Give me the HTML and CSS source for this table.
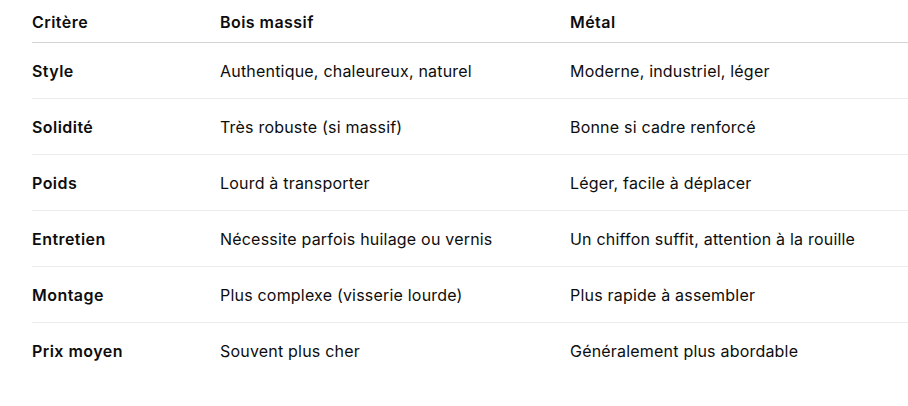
FILE: index.html
```html
<!DOCTYPE html>
<html lang="fr">
<head>
<meta charset="utf-8">
<link rel="stylesheet" href="styles.css">
</head>
<body>
<div class="wrap">
<table class="cmp">
<colgroup><col class="c1"><col class="c2"><col class="c3"></colgroup>
<thead>
<tr><th>Critère</th><th>Bois massif</th><th>Métal</th></tr>
</thead>
<tbody>
<tr><td class="k">Style</td><td>Authentique, chaleureux, naturel</td><td>Moderne, industriel, léger</td></tr>
<tr><td class="k">Solidité</td><td>Très robuste (si massif)</td><td>Bonne si cadre renforcé</td></tr>
<tr><td class="k">Poids</td><td>Lourd à transporter</td><td>Léger, facile à déplacer</td></tr>
<tr><td class="k">Entretien</td><td>Nécessite parfois huilage ou vernis</td><td>Un chiffon suffit, attention à la rouille</td></tr>
<tr><td class="k">Montage</td><td>Plus complexe (visserie lourde)</td><td>Plus rapide à assembler</td></tr>
<tr><td class="k">Prix moyen</td><td>Souvent plus cher</td><td>Généralement plus abordable</td></tr>
</tbody>
</table>
</div>
</body>
</html>
```
FILE: styles.css
```css
html, body { margin: 0; padding: 0; background: #fff; }
body { font-family: Inter, "Noto Sans", sans-serif; color: #0d0d0d; font-size: 16px; }
.wrap { padding: 0 0 0 32px; }
.cmp { border-collapse: collapse; table-layout: fixed; width: 876px; }
.c1 { width: 188px; }
.c2 { width: 350px; }
.c3 { width: 338px; }
th, td { text-align: left; padding: 0; line-height: 24px; vertical-align: middle; letter-spacing: 0.2px; }
th { font-weight: 600; padding: 10px 0 8px; border-bottom: 1px solid #d4d4d4; letter-spacing: 0.45px; }
td { padding: 16px 0 15px; border-bottom: 1px solid #ececec; font-weight: 400; }
td.k { font-weight: 600; letter-spacing: 0.45px; }
tbody tr:last-child td { border-bottom: none; }
```
